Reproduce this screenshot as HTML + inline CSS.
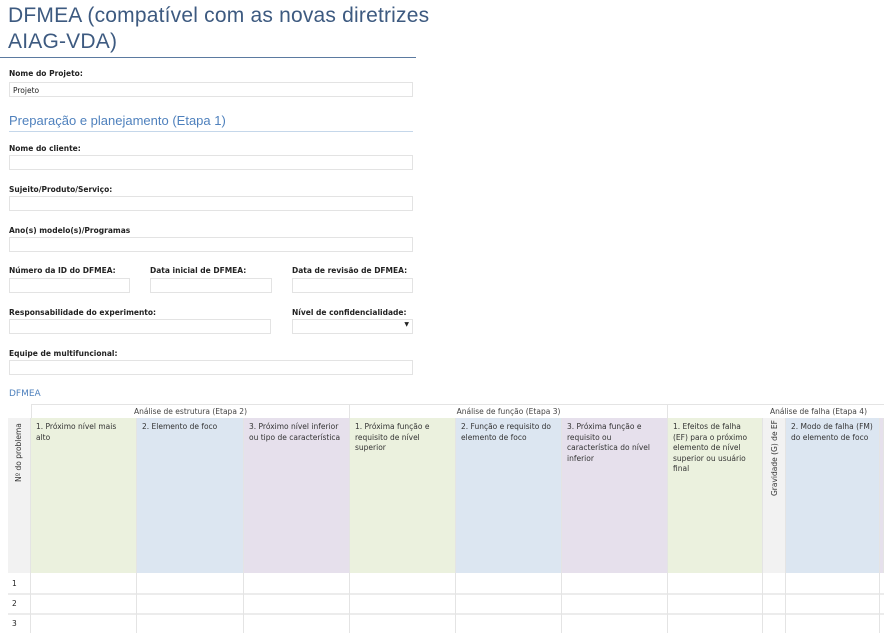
<!DOCTYPE html>
<html><head><meta charset="utf-8"><style>
*{box-sizing:border-box;margin:0;padding:0}
body{width:884px;height:633px;overflow:hidden;background:#fff;font-family:"DejaVu Sans","Liberation Sans",sans-serif;position:relative;color:#222}
.a{position:absolute}
h1{position:absolute;left:8px;top:3px;font-weight:normal;font-size:21px;line-height:26px;color:#3d5a80;font-family:"Liberation Sans",sans-serif;letter-spacing:0.2px}
.lbl{position:absolute;font-size:7.5px;font-weight:bold;color:#222}
.in{position:absolute;height:15px;border:1px solid #e3e3e3;background:#fff;font-size:7.5px;padding:3px 3px}
.c{position:absolute;border-right:1px solid #e4e4e4;font-size:7.5px;line-height:10.5px;padding:4px 5px;color:#333}
.g{background:#ebf1de}.b{background:#dce6f1}.p{background:#e6e0ec}.gr{background:#f2f2f2}
.hl{position:absolute;height:1px;background:#e4e4e4}
</style></head><body>
<h1>DFMEA (compatível com as novas diretrizes<br>AIAG-VDA)</h1>
<div class="a" style="left:0;top:57px;width:416px;height:1px;background:#5b7aa0"></div>
<div class="lbl" style="left:9px;top:69px">Nome do Projeto:</div>
<div class="in" style="left:9px;top:82px;width:404px">Projeto</div>
<div class="a" style="left:9px;top:113px;font-size:13px;color:#4f81bd;font-family:'Liberation Sans',sans-serif">Preparação e planejamento (Etapa 1)</div>
<div class="a" style="left:9px;top:131px;width:404px;height:1px;background:#c5d7ea"></div>
<div class="lbl" style="left:9px;top:144px">Nome do cliente:</div>
<div class="in" style="left:9px;top:155px;width:404px"></div>
<div class="lbl" style="left:9px;top:185px">Sujeito/Produto/Serviço:</div>
<div class="in" style="left:9px;top:196px;width:404px"></div>
<div class="lbl" style="left:9px;top:226px">Ano(s) modelo(s)/Programas</div>
<div class="in" style="left:9px;top:237px;width:404px"></div>
<div class="lbl" style="left:9px;top:266px">Número da ID do DFMEA:</div>
<div class="lbl" style="left:150px;top:266px">Data inicial de DFMEA:</div>
<div class="lbl" style="left:292px;top:266px">Data de revisão de DFMEA:</div>
<div class="in" style="left:9px;top:278px;width:121px"></div>
<div class="in" style="left:150px;top:278px;width:122px"></div>
<div class="in" style="left:292px;top:278px;width:121px"></div>
<div class="lbl" style="left:9px;top:308px">Responsabilidade do experimento:</div>
<div class="lbl" style="left:292px;top:308px">Nível de confidencialidade:</div>
<div class="in" style="left:9px;top:319px;width:262px"></div>
<div class="in" style="left:292px;top:319px;width:121px"><span style="position:absolute;right:3px;top:1px;font-size:6px">▼</span></div>
<div class="lbl" style="left:9px;top:349px">Equipe de multifuncional:</div>
<div class="in" style="left:9px;top:360px;width:404px"></div>
<div class="a" style="left:9px;top:389px;font-size:9px;color:#4f81bd">DFMEA</div>

<div class="hl" style="left:31px;top:404px;width:853px"></div>
<div class="a" style="left:31px;top:404px;width:319px;height:14px;border-left:1px solid #e4e4e4;border-right:1px solid #e4e4e4;font-size:7.5px;text-align:center;padding-top:3px;color:#444">Análise de estrutura (Etapa 2)</div>
<div class="a" style="left:350px;top:404px;width:318px;height:14px;border-right:1px solid #e4e4e4;font-size:7.5px;text-align:center;padding-top:3px;color:#444">Análise de função (Etapa 3)</div>
<div class="a" style="left:668px;top:404px;width:216px;height:14px;font-size:7.5px;text-align:right;padding-top:3px;padding-right:17px;color:#444">Análise de falha (Etapa 4)</div>

<div class="c gr" style="left:8px;top:418px;width:23px;height:155px"><div style="position:absolute;left:6px;top:62px;transform:rotate(-90deg);transform-origin:left top;white-space:nowrap;position:absolute;top:64px;left:6px">Nº do problema</div></div>
<div class="c g" style="left:31px;top:418px;width:106px;height:155px">1. Próximo nível mais alto</div>
<div class="c b" style="left:137px;top:418px;width:107px;height:155px">2. Elemento de foco</div>
<div class="c p" style="left:244px;top:418px;width:106px;height:155px">3. Próximo nível inferior ou tipo de característica</div>
<div class="c g" style="left:350px;top:418px;width:106px;height:155px">1. Próxima função e requisito de nível superior</div>
<div class="c b" style="left:456px;top:418px;width:106px;height:155px">2. Função e requisito do elemento de foco</div>
<div class="c p" style="left:562px;top:418px;width:106px;height:155px">3. Próxima função e requisito ou característica do nível inferior</div>
<div class="c g" style="left:668px;top:418px;width:95px;height:155px">1. Efeitos de falha (EF) para o próximo elemento de nível superior ou usuário final</div>
<div class="c gr" style="left:763px;top:418px;width:23px;height:155px"><div style="position:absolute;left:7px;top:78px;transform:rotate(-90deg);transform-origin:left top;white-space:nowrap">Gravidade (G) de EF</div></div>
<div class="c b" style="left:786px;top:418px;width:94px;height:155px">2. Modo de falha (FM) do elemento de foco</div>
<div class="c p" style="left:880px;top:418px;width:4px;height:155px;padding:0"></div>

<div class="hl" style="left:8px;top:593px;width:876px;height:2px;background:#ececec"></div>
<div class="hl" style="left:8px;top:613px;width:876px;height:2px;background:#ececec"></div>
<div class="a" style="left:12px;top:579px;font-size:7.5px">1</div>
<div class="a" style="left:12px;top:599px;font-size:7.5px">2</div>
<div class="a" style="left:12px;top:619px;font-size:7.5px">3</div>
<div class="a" style="left:30px;top:573px;width:1px;height:60px;background:#e4e4e4"></div>
<div class="a" style="left:136px;top:573px;width:1px;height:60px;background:#e4e4e4"></div>
<div class="a" style="left:243px;top:573px;width:1px;height:60px;background:#e4e4e4"></div>
<div class="a" style="left:349px;top:573px;width:1px;height:60px;background:#e4e4e4"></div>
<div class="a" style="left:455px;top:573px;width:1px;height:60px;background:#e4e4e4"></div>
<div class="a" style="left:561px;top:573px;width:1px;height:60px;background:#e4e4e4"></div>
<div class="a" style="left:667px;top:573px;width:1px;height:60px;background:#e4e4e4"></div>
<div class="a" style="left:762px;top:573px;width:1px;height:60px;background:#e4e4e4"></div>
<div class="a" style="left:785px;top:573px;width:1px;height:60px;background:#e4e4e4"></div>
<div class="a" style="left:879px;top:573px;width:1px;height:60px;background:#e4e4e4"></div>
</body></html>
